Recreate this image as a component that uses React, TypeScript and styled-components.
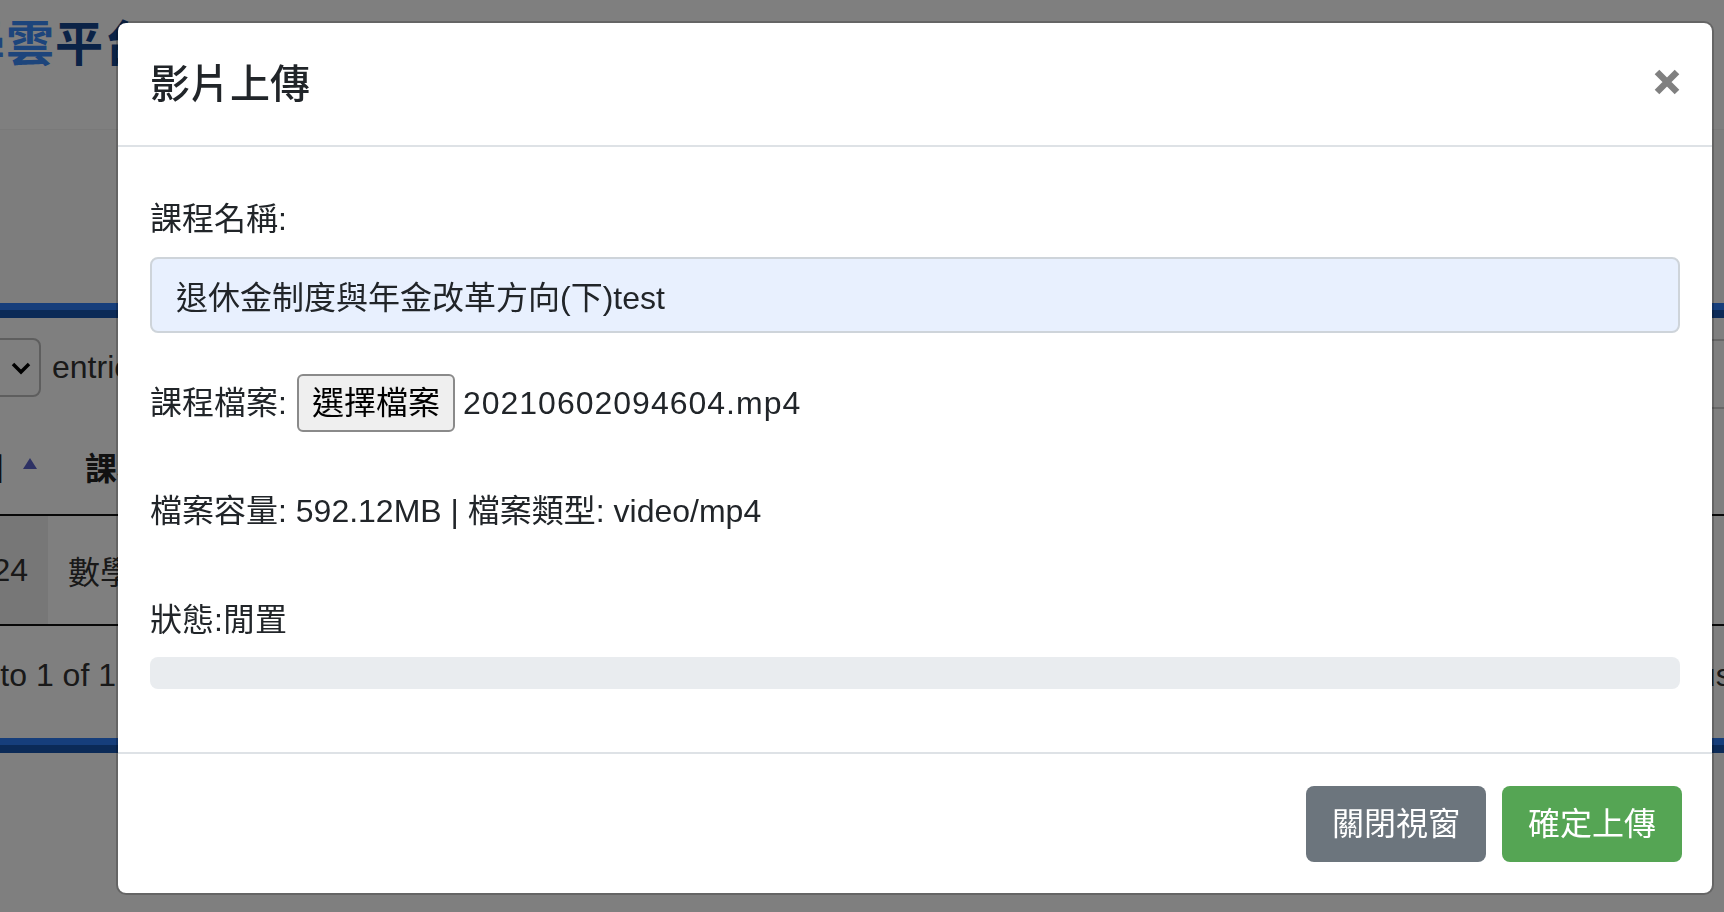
import styled, { createGlobalStyle } from "styled-components";

const GlobalStyle = createGlobalStyle`
  html, body {
    margin: 0;
    padding: 0;
  }
  body {
    width: 1724px;
    height: 912px;
    overflow: hidden;
    background: #fff;
    color: #212529;
    font-family: "Liberation Sans", "Noto Sans CJK TC", sans-serif;
  }
  * {
    box-sizing: border-box;
  }
`;

/* ---------- page behind the modal ---------- */

const Page = styled.div`
  position: relative;
  width: 1724px;
  height: 912px;
  overflow: hidden;
  background: #fff;
`;

const SiteHeader = styled.header`
  height: 130px;
  padding-top: 10px;
  border-bottom: 1px solid #f2f2f2;
`;

const SiteTitle = styled.h1`
  margin: 0 0 0 -43px;
  font: 700 48px/60px "Noto Sans CJK TC", sans-serif;
  letter-spacing: 1px;
  color: #3a8af8;
  white-space: nowrap;

  span {
    color: #16468f;
  }
`;

const NavArea = styled.div`
  height: 173px;
  background: #fafafa;
`;

const BlueBar = styled.div`
  height: 15px;
  background: linear-gradient(#2c7cf6 0 7px, #1654ae 7px 15px);
`;

const Card = styled.section`
  height: 420px;
  padding-top: 20px;
  background: #fff;
`;

const Controls = styled.div`
  display: flex;
  justify-content: space-between;
  align-items: flex-start;
  height: 80px;
`;

const LengthBox = styled.div`
  display: flex;
  align-items: center;
  gap: 11px;
  margin-left: -60px;
  font-size: 32px;
  color: #333;
`;

const SelectBox = styled.div`
  display: flex;
  align-items: center;
  justify-content: flex-end;
  width: 101px;
  height: 59px;
  padding-right: 8px;
  border: 2px solid #bcbcbc;
  border-radius: 8px;
  color: #000;
`;

const SearchBox = styled.div`
  width: 400px;
  height: 70px;
  margin: 1px -290px 0 0;
  border: 2px solid #cfcfcf;
  border-radius: 6px;
`;

const Table = styled.div`
  display: grid;
  grid-template-columns: 108px 1fr;
  margin-left: -60px;
  margin-right: -20px;
  font-size: 32px;
  color: #333;
`;

const HeadCell = styled.div<{ $first?: boolean }>`
  display: flex;
  align-items: center;
  justify-content: ${(p) => (p.$first ? "flex-end" : "flex-start")};
  height: 98px;
  padding: ${(p) => (p.$first ? "0 11px 0 0" : "0 0 0 37px")};
  border-bottom: 2px solid #111;
  font-weight: 700;
  color: #222;
`;

const SortArrow = styled.span`
  width: 0;
  height: 0;
  margin: 0 0 6px 17px;
  border-left: 7.5px solid transparent;
  border-right: 7.5px solid transparent;
  border-bottom: 11px solid #5a62c8;
`;

const BodyCell = styled.div<{ $sorted?: boolean }>`
  display: flex;
  align-items: center;
  justify-content: ${(p) => (p.$sorted ? "flex-end" : "flex-start")};
  height: 110px;
  padding: ${(p) => (p.$sorted ? "0 20px 0 0" : "0 0 0 20px")};
  border-bottom: 2px solid #111;
  background: ${(p) => (p.$sorted ? "#eeeeee" : "#fff")};
`;

const InfoRow = styled.div`
  display: flex;
  justify-content: space-between;
  align-items: center;
  height: 98px;
  font-size: 32px;
  color: #333;
`;

const InfoText = styled.span`
  margin-left: -158px;
  white-space: nowrap;
`;

const Pager = styled.span`
  margin-right: -109px;
  white-space: nowrap;
`;

/* ---------- modal ---------- */

const Backdrop = styled.div`
  position: fixed;
  inset: 0;
  background: rgba(0, 0, 0, 0.5);
`;

const Dialog = styled.div`
  position: absolute;
  left: 116px;
  top: 21px;
  width: 1598px;
  display: flex;
  flex-direction: column;
  background: #fff;
  border: 2px solid rgba(0, 0, 0, 0.2);
  border-radius: 10px;
  background-clip: padding-box;
`;

const ModalHeader = styled.div`
  display: flex;
  align-items: center;
  justify-content: space-between;
  padding: 31px 32px;
  border-bottom: 2px solid #dee2e6;
`;

const ModalTitle = styled.h5`
  margin: 0;
  font-size: 40px;
  line-height: 60px;
  font-weight: 500;
  color: #212529;
`;

const CloseButton = styled.button`
  display: flex;
  align-items: center;
  justify-content: center;
  width: 40px;
  height: 40px;
  margin: 0 -7px 4px 0;
  padding: 0;
  border: 0;
  background: transparent;
  cursor: pointer;
`;

const ModalBody = styled.div`
  padding: 32px 32px 63px;
  font-size: 32px;
  line-height: 48px;
`;

const FieldLabel = styled.label`
  display: block;
  margin: 16px 0 14px;
`;

const TextInput = styled.input`
  display: block;
  width: 100%;
  height: 76px;
  margin-bottom: 41px;
  padding: 0 24px;
  border: 2px solid #ced4da;
  border-radius: 8px;
  background: #e8f0fe;
  font: inherit;
  color: #212529;
  outline: none;
`;

const FileRow = styled.div`
  display: flex;
  align-items: center;
  height: 58px;
  margin-bottom: 55px;
`;

const FileButton = styled.button`
  height: 58px;
  margin: 0 8px 0 10px;
  padding: 0 13px;
  border: 2px solid #8a8a8a;
  border-radius: 6px;
  background: #efefef;
  font: inherit;
  line-height: 1;
  color: #000;
`;

const FileName = styled.span`
  letter-spacing: 1px;
`;

const InfoLine = styled.div<{ $gap: number }>`
  margin-bottom: ${(p) => p.$gap}px;
  white-space: nowrap;
`;

const Progress = styled.div`
  height: 32px;
  border-radius: 8px;
  background: #e9ecef;
  overflow: hidden;
`;

const ModalFooter = styled.div`
  display: flex;
  justify-content: flex-end;
  padding: 24px 22px 23px 24px;
  border-top: 2px solid #dee2e6;
`;

const Button = styled.button<{ $variant: "secondary" | "success" }>`
  height: 76px;
  margin: 8px;
  padding: 0 24px;
  border: 2px solid transparent;
  border-radius: 8px;
  background: ${(p) => (p.$variant === "success" ? "#55a554" : "#6c757d")};
  color: #fff;
  font: inherit;
  font-size: 32px;
  line-height: 48px;
  cursor: pointer;
`;

const CloseIcon = () => (
  <svg width="26" height="26" viewBox="0 0 26 26">
    <path d="M3 3 L23 23 M23 3 L3 23" stroke="#808080" strokeWidth="6.5" />
  </svg>
);

const Chevron = () => (
  <svg width="20" height="14" viewBox="0 0 20 14">
    <path d="M2 3 L10 11 L18 3" fill="none" stroke="#000" strokeWidth="3.5" />
  </svg>
);

export default function App() {
  return (
    <>
      <GlobalStyle />
      <Page>
        <SiteHeader>
          <SiteTitle>
            學雲<span>平台</span>
          </SiteTitle>
        </SiteHeader>
        <NavArea />
        <BlueBar />
        <Card>
          <Controls>
            <LengthBox>
              <SelectBox>
                <Chevron />
              </SelectBox>
              entries
            </LengthBox>
            <SearchBox />
          </Controls>
          <Table>
            <HeadCell $first>
              日<SortArrow />
            </HeadCell>
            <HeadCell>課程名稱</HeadCell>
            <BodyCell $sorted>24</BodyCell>
            <BodyCell>數學</BodyCell>
          </Table>
          <InfoRow>
            <InfoText>Showing 1 to 1 of 1 entries</InfoText>
            <Pager>Previous 1 Next</Pager>
          </InfoRow>
        </Card>
        <BlueBar />
      </Page>

      <Backdrop />
      <Dialog role="dialog">
        <ModalHeader>
          <ModalTitle>影片上傳</ModalTitle>
          <CloseButton aria-label="Close">
            <CloseIcon />
          </CloseButton>
        </ModalHeader>
        <ModalBody>
          <FieldLabel>課程名稱:</FieldLabel>
          <TextInput defaultValue="退休金制度與年金改革方向(下)test" />
          <FileRow>
            課程檔案:
            <FileButton>選擇檔案</FileButton>
            <FileName>20210602094604.mp4</FileName>
          </FileRow>
          <InfoLine $gap={61}>檔案容量: 592.12MB | 檔案類型: video/mp4</InfoLine>
          <InfoLine $gap={13}>狀態:閒置</InfoLine>
          <Progress />
        </ModalBody>
        <ModalFooter>
          <Button $variant="secondary">關閉視窗</Button>
          <Button $variant="success">確定上傳</Button>
        </ModalFooter>
      </Dialog>
    </>
  );
}
